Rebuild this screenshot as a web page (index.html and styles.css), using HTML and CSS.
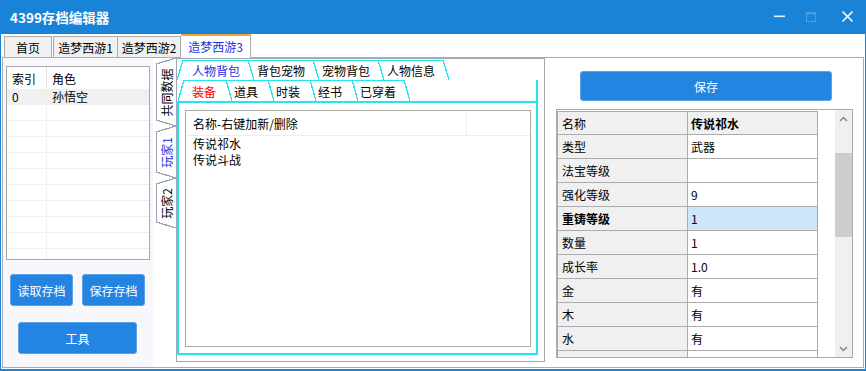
FILE: index.html
```html
<!DOCTYPE html>
<html>
<head>
  <meta charset="utf-8">
  <link rel="stylesheet" href="styles.css">
</head>
<body>
  <div class="window">
    <div class="titlebar">
      <span class="title">4399存档编辑器</span>
      <div class="winctl">
        <svg class="ctl-min" width="11" height="12"><rect x="0" y="4.5" width="11" height="1.6" fill="#e8f2fc"/></svg>
        <svg class="ctl-max" width="10" height="12"><rect x="0.5" y="1.5" width="9" height="9" fill="none" stroke="#4f9de2"/><rect x="0.5" y="1.5" width="9" height="2" fill="#4f9de2"/></svg>
        <svg class="ctl-close" width="11" height="12"><path d="M0.5 0.5 L10.5 10.5 M10.5 0.5 L0.5 10.5" stroke="#e8f2fc" stroke-width="1.6"/></svg>
      </div>
    </div>

    <div class="tabstrip">
      <div class="tab tab-home">首页</div>
      <div class="tab tab-game">造梦西游1</div>
      <div class="tab tab-game2">造梦西游2</div>
      <div class="tab tab-active">造梦西游3</div>
    </div>

    <div class="page">
      <!-- role list + buttons -->
      <div class="left">
        <div class="roles">
          <div class="roles-head">
            <div class="c1">索引</div>
            <div class="c2">角色</div>
          </div>
          <div class="roles-row selected"><div class="c1">0</div><div class="c2">孙悟空</div></div>
          <div class="roles-row"><div class="c1"></div><div class="c2"></div></div>
          <div class="roles-row"><div class="c1"></div><div class="c2"></div></div>
          <div class="roles-row"><div class="c1"></div><div class="c2"></div></div>
          <div class="roles-row"><div class="c1"></div><div class="c2"></div></div>
          <div class="roles-row"><div class="c1"></div><div class="c2"></div></div>
          <div class="roles-row"><div class="c1"></div><div class="c2"></div></div>
          <div class="roles-row"><div class="c1"></div><div class="c2"></div></div>
          <div class="roles-row"><div class="c1"></div><div class="c2"></div></div>
          <div class="roles-row"><div class="c1"></div><div class="c2"></div></div>
          <div class="roles-row"><div class="c1"></div><div class="c2"></div></div>
          <div class="roles-row"><div class="c1"></div><div class="c2"></div></div>
        </div>
        <div class="btnrow">
          <button class="btn btn-small">读取存档</button>
          <button class="btn btn-small">保存存档</button>
        </div>
        <button class="btn btn-tool">工具</button>
      </div>

      <!-- player tabs -->
      <div class="player">
        <div class="vtabs">
          <div class="vtab vtab-common"><span>共同数据</span></div>
          <div class="vtab vtab-p1 active"><span>玩家1</span></div>
          <div class="vtab vtab-p2"><span>玩家2</span></div>
        </div>
        <div class="frame">
          <div class="crow crow1">
            <div class="ctab first active">人物背包</div>
            <div class="ctab">背包宠物</div>
            <div class="ctab">宠物背包</div>
            <div class="ctab">人物信息</div>
          </div>
          <div class="crow crow2">
            <div class="ctab first red">装备</div>
            <div class="ctab">道具</div>
            <div class="ctab">时装</div>
            <div class="ctab">经书</div>
            <div class="ctab wide">已穿着</div>
          </div>
          <div class="cbox">
            <div class="items">
              <div class="items-head">
                <div class="ih1">名称-右键加新/删除</div>
                <div class="ih2"></div>
              </div>
              <div class="item">传说祁水</div>
              <div class="item">传说斗战</div>
            </div>
          </div>
        </div>
      </div>

      <!-- property grid -->
      <div class="right">
        <button class="btn btn-save">保存</button>
        <div class="pgrid">
          <div class="pg-table">
            <div class="pg-row head"><div class="pg-name">名称</div><div class="pg-val">传说祁水</div></div>
            <div class="pg-row"><div class="pg-name">类型</div><div class="pg-val">武器</div></div>
            <div class="pg-row"><div class="pg-name">法宝等级</div><div class="pg-val"></div></div>
            <div class="pg-row"><div class="pg-name">强化等级</div><div class="pg-val">9</div></div>
            <div class="pg-row selected"><div class="pg-name">重铸等级</div><div class="pg-val">1</div></div>
            <div class="pg-row"><div class="pg-name">数量</div><div class="pg-val">1</div></div>
            <div class="pg-row"><div class="pg-name">成长率</div><div class="pg-val">1.0</div></div>
            <div class="pg-row"><div class="pg-name">金</div><div class="pg-val">有</div></div>
            <div class="pg-row"><div class="pg-name">木</div><div class="pg-val">有</div></div>
            <div class="pg-row"><div class="pg-name">水</div><div class="pg-val">有</div></div>
            <div class="pg-row"><div class="pg-name"></div><div class="pg-val"></div></div>
          </div>
          <div class="scrollbar">
            <div class="sb-arrow">
              <svg width="9" height="6"><path d="M1 5 L4.5 1.5 L8 5" fill="none" stroke="#868686" stroke-width="1.5"/></svg>
            </div>
            <div class="sb-thumb"></div>
            <div class="sb-fill"></div>
            <div class="sb-arrow">
              <svg width="9" height="6"><path d="M1 1 L4.5 4.5 L8 1" fill="none" stroke="#868686" stroke-width="1.5"/></svg>
            </div>
          </div>
        </div>
      </div>
    </div>
  </div>
</body>
</html>
```

FILE: styles.css
```css
* {
  box-sizing: border-box;
}

body {
  margin: 0;
  font-family: "Noto Sans CJK SC", "Microsoft YaHei", sans-serif;
  font-size: 12px;
  color: #000000;
  background: #ffffff;
}

.window {
  width: 866px;
  height: 371px;
  border: solid #1883d7;
  border-width: 0 1px 2px;
  display: flex;
  flex-direction: column;
  overflow: hidden;
}

/* Title bar */
.titlebar {
  flex: none;
  height: 34px;
  background: #1883d7;
  display: flex;
  align-items: center;
  padding-left: 9px;
  color: #ffffff;
}

.title {
  font-size: 13.5px;
  font-weight: bold;
}

.winctl {
  margin-left: auto;
  display: flex;
  align-items: center;
  margin-right: 12px;
}

.ctl-max {
  margin-left: 21px;
}

.ctl-close {
  margin-left: 26px;
}

/* Main tabs */
.tabstrip {
  flex: none;
  height: 23px;
  display: flex;
  align-items: flex-end;
  padding-left: 3px;
}

.tab {
  height: 21px;
  border: 1px solid #acacac;
  border-bottom: none;
  background: #f0f0f0;
  display: flex;
  align-items: center;
  justify-content: center;
}

.tab-home {
  width: 48px;
  margin-right: 1px;
}

.tab-game {
  width: 65px;
}

.tab-game2 {
  width: 63px;
  border-left: none;
}

.tab-active {
  position: relative;
  z-index: 1;
  width: 70px;
  height: 24px;
  margin-bottom: -1px;
  background: #ffffff;
  border-top: 2px solid #f4a531;
  border-left: none;
  color: #1730e6;
  padding-bottom: 1px;
}

.page {
  flex: 1;
  min-height: 0;
  margin: 0 1px 1px;
  border: 1px solid #acacac;
  display: flex;
}

/* Left panel */
.left {
  flex: none;
  width: 150px;
  background: #f8f8fc;
  padding: 8px 0 0 3px;
  display: flex;
  flex-direction: column;
}

.roles {
  width: 144px;
  height: 194px;
  border: 1px solid #a9a9a9;
  background: #ffffff;
  overflow: hidden;
}

.roles-head {
  display: flex;
  height: 22px;
}

.roles-head .c1,
.roles-head .c2 {
  display: flex;
  align-items: center;
}

.roles-head .c1 {
  border-right: 1px solid #e5e5e5;
}

.c1 {
  width: 40px;
  padding-left: 5px;
}

.c2 {
  padding-left: 5px;
}

.roles-row {
  display: flex;
  height: 16px;
  line-height: 15px;
  border-bottom: 1px solid #efefef;
}

.roles-row .c1 {
  border-right: 1px solid #efefef;
}

.roles-row.selected {
  background: #f0f0f0;
}

.btn {
  font-family: inherit;
  font-size: 12px;
  color: #ffffff;
  background: #2384e2;
  border: 1px solid #5ba2ea;
  border-radius: 3px;
  padding: 0;
}

.btnrow {
  display: flex;
  gap: 9px;
  margin: 14px 0 0 4px;
}

.btn-small {
  width: 63px;
  height: 32px;
}

.btn-tool {
  width: 119px;
  height: 32px;
  margin: 16px 0 0 12px;
}

/* Player tabs */
.player {
  flex: none;
  display: flex;
  align-items: flex-start;
  margin-left: 3px;
}

.vtabs {
  width: 20px;
  display: flex;
  flex-direction: column;
}

.vtab {
  position: relative;
  display: flex;
  align-items: center;
  justify-content: center;
  background: linear-gradient(#9aa6b2, #9aa6b2) left 6px / 1px calc(100% - 12px) no-repeat;
}

.vtab::before,
.vtab::after {
  content: "";
  position: absolute;
  left: 0;
  width: 20px;
  height: 6px;
}

.vtab::before {
  top: 0;
  background: linear-gradient(to bottom right, transparent calc(50% - 0.7px), #9aa6b2 calc(50% - 0.7px), #9aa6b2 calc(50% + 0.7px), transparent calc(50% + 0.7px));
}

.vtab::after {
  bottom: 0;
  background: linear-gradient(to top right, transparent calc(50% - 0.7px), #9aa6b2 calc(50% - 0.7px), #9aa6b2 calc(50% + 0.7px), transparent calc(50% + 0.7px));
}

.vtab span {
  white-space: nowrap;
  transform: rotate(-90deg);
}

.vtab-common {
  height: 68px;
}

.vtab-p1 {
  height: 52px;
}

.vtab-p2 {
  height: 50px;
}

.vtab.active span {
  color: #1730e6;
}

.frame {
  width: 369px;
  height: 304px;
  border: 1px solid #a0a8b0;
}

.crow {
  display: flex;
}

.crow1 {
  margin-top: 1px;
  height: 20px;
  padding-left: 6px;
}

.crow2 {
  width: 361px;
  height: 21px;
  padding-left: 7px;
  border-right: 2px solid #22e6ef;
}

.ctab {
  position: relative;
  height: 100%;
  border-top: 1px solid #22e6ef;
  display: flex;
  align-items: center;
}

.crow1 .ctab {
  width: 65px;
  padding-left: 9px;
}

.crow2 .ctab {
  width: 42px;
  padding-left: 8px;
}

.crow2 .ctab.wide {
  width: 52px;
}

.ctab::after {
  content: "";
  position: absolute;
  top: -1px;
  right: -6px;
  width: 6px;
  height: calc(100% + 1px);
  background: linear-gradient(to top right, transparent calc(50% - 0.7px), #22e6ef calc(50% - 0.7px), #22e6ef calc(50% + 0.7px), transparent calc(50% + 0.7px));
}

.ctab.first::before {
  content: "";
  position: absolute;
  top: -1px;
  left: -6px;
  width: 6px;
  height: calc(100% + 1px);
  background: linear-gradient(to bottom right, transparent calc(50% - 0.7px), #22e6ef calc(50% - 0.7px), #22e6ef calc(50% + 0.7px), transparent calc(50% + 0.7px));
}

.ctab.active {
  color: #1730e6;
}

.ctab.red {
  color: #ff0000;
}

.cbox {
  width: 361px;
  height: 254px;
  border: 2px solid #22e6ef;
  padding: 7px 5px 6px 6px;
}

.items {
  height: 237px;
  border: 1px solid #a9a9a9;
  background: #ffffff;
}

.items-head {
  display: flex;
  height: 25px;
  border-bottom: 1px solid #e5eef9;
}

.ih1 {
  width: 281px;
  padding-left: 7px;
  display: flex;
  align-items: center;
  border-right: 1px solid #e5eef9;
}

.item {
  height: 16px;
  line-height: 16px;
  padding-left: 7px;
}

/* Property grid */
.right {
  flex: none;
  width: 297px;
  margin-left: 11px;
  display: flex;
  flex-direction: column;
}

.btn-save {
  width: 252px;
  height: 30px;
  margin: 13px 0 0 24px;
}

.pgrid {
  margin-top: 8px;
  height: 249px;
  border: 1px solid #a9a9a9;
  display: flex;
  overflow: hidden;
}

.pg-table {
  width: 261px;
  margin-top: 1px;
  border-top: 1px solid #acacac;
  border-left: 1px solid #acacac;
  overflow: hidden;
}

.pg-row {
  display: flex;
  height: 24px;
  border-bottom: 1px solid #acacac;
}

.pg-row.head {
  height: 23px;
}

.pg-name,
.pg-val {
  width: 130px;
  border-right: 1px solid #acacac;
  display: flex;
  align-items: center;
}

.pg-name {
  background: #f0f0f0;
  padding-left: 4px;
}

.pg-val {
  padding-left: 3px;
}

.pg-row.head .pg-val {
  background: #f0f0f0;
  font-weight: bold;
}

.pg-row.selected .pg-name {
  font-weight: bold;
}

.pg-row.selected .pg-val {
  background: #cde6f9;
}

.scrollbar {
  margin-left: auto;
  width: 17px;
  background: #f0f0f0;
  display: flex;
  flex-direction: column;
}

.sb-arrow {
  height: 17px;
  display: flex;
  align-items: center;
  justify-content: center;
}

.sb-thumb {
  height: 84px;
  margin-top: 26px;
  background: #cdcdcd;
}

.sb-fill {
  flex: 1;
}
```
